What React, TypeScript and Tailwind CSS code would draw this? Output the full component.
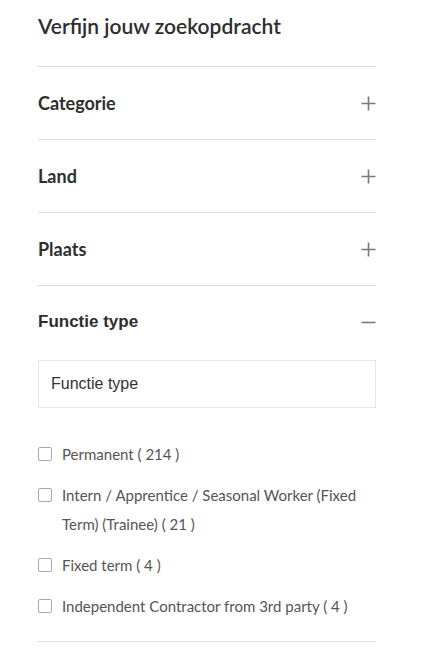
import { useState } from 'react';

const sections = ['Categorie', 'Land', 'Plaats'];

const options = [
  { label: 'Permanent', count: 214 },
  { label: 'Intern / Apprentice / Seasonal Worker (Fixed Term) (Trainee)', count: 21 },
  { label: 'Fixed term', count: 4 },
  { label: 'Independent Contractor from 3rd party', count: 4 },
];

function Plus() {
  return (
    <svg width="15" height="15" viewBox="0 0 15 15" className="text-[#7a7a7a]">
      <path d="M7.5 0.5v14M0.5 7.5h14" stroke="currentColor" strokeWidth="1.6" />
    </svg>
  );
}

function Minus() {
  return (
    <svg width="15" height="15" viewBox="0 0 15 15" className="text-[#7a7a7a]">
      <path d="M0.5 7.5h14" stroke="currentColor" strokeWidth="1.6" />
    </svg>
  );
}

export default function App() {
  const [checked, setChecked] = useState<Record<string, boolean>>({});

  return (
    <div className="min-h-screen bg-white font-['Lato','Noto_Sans',sans-serif]">
      <div className="w-[338px] ml-[38px] pt-[12px]">
        {/* Header */}
        <h2 className="text-[21px] leading-[28px] font-semibold text-[#2e2e2e] mb-[26px]">
          Verfijn jouw zoekopdracht
        </h2>

        {/* Collapsed filters */}
        {sections.map((s) => (
          <div key={s} className="border-t border-[#dcdcdc]">
            <button className="w-full h-[72px] flex items-center justify-between text-left">
              <span className="text-[18px] font-bold text-[#2e2e2e]">{s}</span>
              <Plus />
            </button>
          </div>
        ))}

        {/* Expanded filter */}
        <div className="border-t border-[#dcdcdc]">
          <button className="w-full h-[72px] flex items-center justify-between text-left">
            <span className="text-[17px] font-bold text-[#2e2e2e] font-['Liberation_Sans',Arial,sans-serif]">
              Functie type
            </span>
            <Minus />
          </button>
          <input
            placeholder="Functie type"
            className="mt-[2px] w-full h-[48px] border border-[#e6e6e6] px-[12px] text-[16px] text-[#333] placeholder:text-[#333] outline-none font-['Liberation_Sans',Arial,sans-serif]"
          />
          <ul className="pt-[32px] pb-[20px] flex flex-col gap-[12px]">
            {options.map((o) => (
              <li key={o.label} className="flex items-start">
                <input
                  type="checkbox"
                  checked={!!checked[o.label]}
                  onChange={() => setChecked((c) => ({ ...c, [o.label]: !c[o.label] }))}
                  className="appearance-none shrink-0 w-[14px] h-[14px] mt-[7px] border border-[#a8a8a8] rounded-[2px] bg-white checked:bg-[#555]"
                />
                <span className="ml-[10px] text-[15px] leading-[29px] text-[#555]">
                  {`${o.label} ( ${o.count} )`}
                </span>
              </li>
            ))}
          </ul>
        </div>
        <div className="border-t border-[#dcdcdc]" />
      </div>
    </div>
  );
}
